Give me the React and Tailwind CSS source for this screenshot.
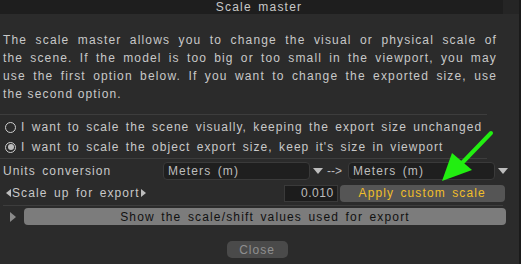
import React from 'react';

const font = { fontFamily: '"Liberation Sans", Arial, sans-serif' };

const Separator = () => <div className="h-px bg-[#3d3d3d] mr-[16px]" />;

const Radio = ({ checked, label }) => (
    <div className="flex items-center h-[20px] pl-[5px]">
        <span className="w-[11px] h-[11px] rounded-full border border-[#cfcfcf] flex items-center justify-center">
            {checked && <span className="w-[6px] h-[6px] rounded-full bg-[#bdbdbd]" />}
        </span>
        <span className="ml-[5px] text-[12px] tracking-[1.05px] [word-spacing:2px] text-[#c8c8c8]">{label}</span>
    </div>
);

const Caret = () => (
    <svg width="10" height="6" viewBox="0 0 10 6" className="shrink-0">
        <path d="M0 0 L10 0 L5 6 Z" fill="#bdbdbd" />
    </svg>
);

const Combo = ({ value }) => (
    <div className="w-[147px] h-[18px] shrink-0 rounded-[4px] bg-[#1f1f1f] border border-[#3a3a3a] flex items-center pl-[4px] text-[12px] tracking-[1.1px] [word-spacing:2px] text-[#bdbdbd]">
        {value}
    </div>
);

const lines = [
    'The scale master allows you to change the visual or physical scale of',
    'the scene. If the model is too big or too small in the viewport, you may',
    'use the first option below. If you want to change the exported size, use',
];

export default function App() {
    return (
        <div className="w-[521px] h-[264px] bg-[#2b2b2b] relative overflow-hidden flex" style={font}>
            <div className="w-[503px] shrink-0 flex flex-col">
                {/* Title bar */}
                <div className="h-[14px] bg-[#1e1e1e] flex items-center justify-center text-[12px] tracking-[1.2px] [word-spacing:2px] text-[#c8c8c8] pl-[15px]">
                    Scale master
                </div>

                {/* Description */}
                <div className="pt-[17px] pl-[3px] pr-[6px] text-[12px] tracking-[1.15px] text-[#c8c8c8] leading-[18px]">
                    {lines.map((l) => (
                        <div key={l} className="text-justify [text-align-last:justify]">{l}</div>
                    ))}
                    <div>the second option.</div>
                </div>

                <div className="mt-[11px]"><Separator /></div>
                <div className="pt-[2px]">
                    <Radio label="I want to scale the scene visually, keeping the export size unchanged" />
                    <Radio checked label="I want to scale the object export size, keep it's size in viewport" />
                </div>
                <div className="mt-[1px]"><Separator /></div>

                {/* Units conversion */}
                <div className="flex items-center h-[23px] pl-[3px] text-[12px] tracking-[1.1px] [word-spacing:2px] text-[#c8c8c8]">
                    <span className="w-[160px] shrink-0">Units conversion</span>
                    <Combo value="Meters (m)" />
                    <span className="ml-[3px]"><Caret /></span>
                    <span className="ml-[4px] w-[21px] shrink-0 text-[#bdbdbd] tracking-[0px]">--&gt;</span>
                    <Combo value="Meters (m)" />
                    <span className="ml-[3px]"><Caret /></span>
                </div>

                {/* Scale up for export */}
                <div className="flex items-center h-[20px] mt-[1px] pl-[6px] text-[12px] tracking-[1.1px] [word-spacing:2px] text-[#c8c8c8]">
                    <svg width="5" height="8" viewBox="0 0 5 8" className="shrink-0"><path d="M5 0 L0 4 L5 8 Z" fill="#bdbdbd" /></svg>
                    <span className="mx-[1px] shrink-0">Scale up for export</span>
                    <svg width="5" height="8" viewBox="0 0 5 8" className="shrink-0"><path d="M0 0 L5 4 L0 8 Z" fill="#bdbdbd" /></svg>
                    <div className="ml-[138px] w-[54px] h-[17px] shrink-0 bg-[#1c1c1c] border border-[#3a3a3a] flex items-center justify-end pr-[3px] text-[#bdbdbd] tracking-[0.5px]">
                        0.010
                    </div>
                    <div className="ml-[2px] w-[165px] h-[17px] shrink-0 rounded-[4px] bg-[#555555] flex items-center justify-center text-[#f0be2a]">
                        Apply custom scale
                    </div>
                </div>
                <div className="mt-[2px] h-px bg-[#3d3d3d] ml-[3px] mr-[0px]" />

                {/* Show values */}
                <div className="flex items-center h-[17px] pl-[10px] mt-[2px]">
                    <svg width="6" height="10" viewBox="0 0 6 10" className="shrink-0"><path d="M0 0 L6 5 L0 10 Z" fill="#8a8a8a" /></svg>
                    <div className="ml-[8px] w-[482px] h-[17px] shrink-0 rounded-[4px] bg-[#7c7c7c] flex items-center justify-center text-[12px] tracking-[1.15px] [word-spacing:2px] text-[#111111]">
                        Show the scale/shift values used for export
                    </div>
                </div>

                {/* Close */}
                <div className="flex justify-center mt-[16px] pl-[11px]">
                    <div className="w-[61px] h-[17px] rounded-[5px] bg-[#4a4a4a] flex items-center justify-center text-[12px] tracking-[1px] text-[#8f8f8f]">
                        Close
                    </div>
                </div>
            </div>

            {/* Right edge strip */}
            <div className="w-[16px] flex flex-col">
                <div className="h-[14px] bg-[#252525]" />
            </div>
            <div className="w-[2px] bg-[#1a1a1a]" />

            {/* Green annotation arrow */}
            <svg className="absolute left-0 top-0 pointer-events-none" width="521" height="264" viewBox="0 0 521 264">
                <line x1="491" y1="133" x2="462" y2="163" stroke="#22ee11" strokeWidth="4" strokeLinecap="round" />
                <path d="M442 181 L452 153 L472 170 Z" fill="#22ee11" />
            </svg>
        </div>
    );
}
